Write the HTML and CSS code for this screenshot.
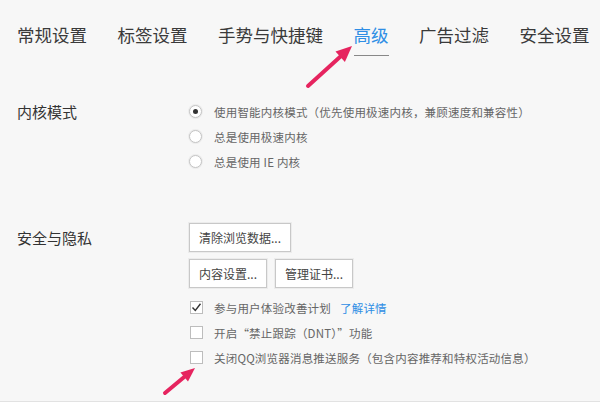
FILE: index.html
```html
<!DOCTYPE html>
<html>
<head>
    <meta charset="utf-8" />
    <title>高级设置</title>
    <link rel="stylesheet" href="styles.css">
</head>
<body>
    <div class="page">
        <div class="tabs">
            <div class="tab">常规设置</div>
            <div class="tab">标签设置</div>
            <div class="tab">手势与快捷键</div>
            <div class="tab active">高级</div>
            <div class="tab">广告过滤</div>
            <div class="tab">安全设置</div>
        </div>

        <div class="section kernel">
            <div class="label">内核模式</div>
            <div class="options">
                <div class="row"><span class="radio on"></span>使用智能内核模式（优先使用极速内核，兼顾速度和兼容性）</div>
                <div class="row"><span class="radio"></span>总是使用极速内核</div>
                <div class="row"><span class="radio"></span>总是使用 IE 内核</div>
            </div>
        </div>

        <div class="section privacy">
            <div class="label tall">安全与隐私</div>
            <div class="options">
                <div class="btns">
                    <button class="btn">清除浏览数据...</button>
                </div>
                <div class="btns">
                    <button class="btn">内容设置...</button>
                    <button class="btn">管理证书...</button>
                </div>
                <div class="checks">
                    <div class="row">
                        <span class="check on">
                            <svg width="11" height="11" viewBox="0 0 11 11"><path d="M1.5 5.5 L4.3 8.5 L9.5 1.8" fill="none" stroke="#333" stroke-width="1.4"/></svg>
                        </span>参与用户体验改善计划<a class="more" href="#">了解详情</a>
                    </div>
                    <div class="row"><span class="check"></span>开启“禁止跟踪（DNT）”功能</div>
                    <div class="row"><span class="check"></span>关闭QQ浏览器消息推送服务（包含内容推荐和特权活动信息）</div>
                </div>
            </div>
        </div>

        <svg class="arrow arrow1" width="60" height="55" viewBox="0 0 60 55">
            <path d="M8 48 L40.2 18.8" stroke="#e6245f" stroke-width="4" stroke-linecap="round"/>
            <polygon points="52,8 44.9,24 35.5,13.6" fill="#e6245f"/>
        </svg>
        <svg class="arrow arrow2" width="50" height="44" viewBox="0 0 50 44">
            <path d="M10 35 L29.2 19" stroke="#e6245f" stroke-width="4" stroke-linecap="round"/>
            <polygon points="40,10 33,23.6 25.4,14.4" fill="#e6245f"/>
        </svg>
    </div>
</body>
</html>
```

FILE: styles.css
```css
body {
    margin: 0;
    background: #f7f7f7;
    font-family: "Noto Sans CJK SC", "Liberation Sans", sans-serif;
    color: #333;
}

.page {
    position: relative;
    width: 600px;
    height: 401px;
    border-bottom: 1px solid #e2e2e2;
    overflow: hidden;
}

.tabs {
    display: flex;
    gap: 30.5px;
    padding-left: 17px;
}

.tab {
    font-size: 17.5px;
    line-height: 20px;
    padding: 25px 0 11px;
    color: #3a3a3a;
    white-space: nowrap;
}

.tab.active {
    color: #2f8ee5;
    padding-bottom: 10px;
    border-bottom: 1px solid #888;
}

.section {
    display: grid;
    grid-template-columns: 171px 1fr;
    padding-left: 17px;
}

.kernel {
    margin-top: 43px;
}

.privacy {
    margin-top: 49px;
}

.label {
    font-size: 15px;
    line-height: 25px;
    color: #333;
}

.label.tall {
    line-height: 29px;
}

.row {
    display: flex;
    align-items: center;
    height: 25px;
    font-size: 11.5px;
    letter-spacing: 0.2px;
    color: #666;
    white-space: nowrap;
}

.radio {
    width: 13px;
    height: 13px;
    margin: 0 12px 0 1px;
    border: 1px solid #c4c4c4;
    border-radius: 50%;
    background: #fff;
    box-shadow: 0 0 0 1px #ececec;
    box-sizing: border-box;
    position: relative;
    flex: none;
}

.radio.on::after {
    content: "";
    position: absolute;
    left: 3px;
    top: 3px;
    width: 5px;
    height: 5px;
    border-radius: 50%;
    background: #333;
}

.btns {
    display: flex;
    gap: 8px;
    margin-bottom: 7px;
    padding-left: 1px;
}

.btn {
    height: 29px;
    padding: 0 9px;
    border: 1px solid #c8c8c8;
    box-shadow: 0 0 0 1px #ececec;
    background: #fff;
    font-family: inherit;
    font-size: 12px;
    color: #444;
}

.checks {
    margin-top: 3px;
}

.check {
    width: 13px;
    height: 13px;
    margin: 0 11px 0 2px;
    border: 1px solid #bdbdbd;
    background: #fff;
    box-sizing: border-box;
    display: flex;
    align-items: center;
    justify-content: center;
    flex: none;
}

.more {
    margin-left: 9px;
    color: #2f8ee5;
    text-decoration: none;
}

.arrow {
    position: absolute;
}

.arrow1 {
    left: 300px;
    top: 38px;
}

.arrow2 {
    left: 155px;
    top: 358px;
}
```
